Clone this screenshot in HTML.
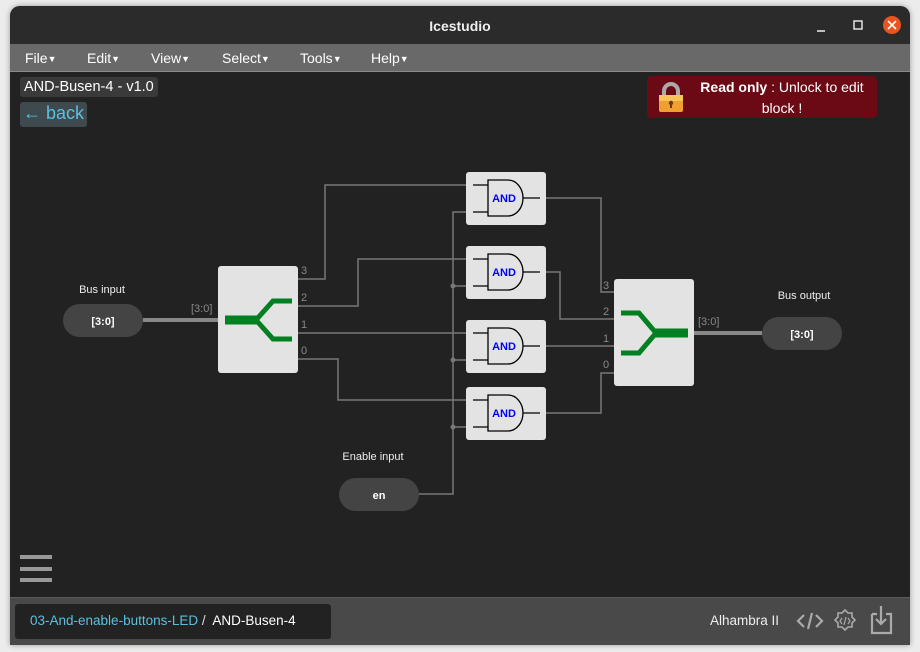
<!DOCTYPE html>
<html><head><meta charset="utf-8">
<style>
*{margin:0;padding:0;box-sizing:border-box}
body{width:920px;height:652px;background:#ececec;font-family:"Liberation Sans",sans-serif;position:relative;overflow:hidden}
.win{position:absolute;left:10px;top:6px;width:900px;height:639px;background:#222;border-radius:10px 10px 0 0;overflow:hidden;box-shadow:0 0 6px rgba(0,0,0,.35)}
.title{position:absolute;left:0;top:0;width:900px;height:38px;background:#2b2b2b;color:#eee;font-weight:bold;font-size:14px;text-align:center;line-height:40px}
.menu{position:absolute;left:0;top:38px;width:900px;height:28px;background:#696969;border-bottom:1px solid #8a8a8a;color:#fff;font-size:14px}
.menu span{position:absolute;top:6px}
.menu small{font-size:9px;vertical-align:1px}
.foot{position:absolute;left:0;top:591px;width:900px;height:48px;background:#494949;border-top:1px solid #5a5a5a}
</style></head><body>
<div class="win">
<div class="title">Icestudio</div>
<svg style="position:absolute;left:0;top:0" width="900" height="38">
<line x1="807" y1="25" x2="815" y2="25" stroke="#eee" stroke-width="1.5"/>
<rect x="844" y="15" width="8" height="8" fill="none" stroke="#eee" stroke-width="1.4"/>
<circle cx="882" cy="19" r="9" fill="#e95420"/>
<path d="M878 15 L886 23 M886 15 L878 23" stroke="#fff" stroke-width="1.6"/>
</svg>
<div class="menu">
<span style="left:15px">File<small>▼</small></span><span style="left:77px">Edit<small>▼</small></span><span style="left:141px">View<small>▼</small></span><span style="left:212px">Select<small>▼</small></span><span style="left:290px">Tools<small>▼</small></span><span style="left:361px">Help<small>▼</small></span>
</div>
<div style="position:absolute;left:10px;top:71px;background:#3a3a3a;color:#fff;font-size:14.5px;padding:1px 4px;border-radius:3px;height:20px;line-height:19px">AND-Busen-4 - v1.0</div>
<div style="position:absolute;left:10px;top:96px;background:#3f4a4f;color:#5bc0de;font-size:18px;padding:0 3px;border-radius:3px;height:25px;line-height:23px">← back</div>
<div style="position:absolute;left:637px;top:70px;width:230px;height:42px;background:#6b0a15;border-radius:4px;color:#fff;font-size:14px">
<svg style="position:absolute;left:9px;top:5px" width="30" height="32"><path d="M8 15 V10 a7 7 0 0 1 14 0 V15" fill="none" stroke="#aaa" stroke-width="4"/><rect x="3" y="14" width="24" height="17" rx="2" fill="#f0a030"/><rect x="3" y="14" width="24" height="6" fill="#f7c45a"/><circle cx="15" cy="22" r="2.2" fill="#6b3a10"/><rect x="14" y="22" width="2" height="5" fill="#6b3a10"/></svg>
<div style="position:absolute;left:42px;top:1px;width:186px;text-align:center;line-height:21px"><b>Read only</b> : Unlock to edit block !</div>
</div>
<svg style="position:absolute;left:-10px;top:-6px" width="920" height="652">
<g fill="none" stroke="#777" stroke-width="1.5">
<path d="M298 279 H325 V185 H466"/>
<path d="M298 306 H358 V259 H466"/>
<path d="M298 333 H466"/>
<path d="M298 359 H338 V400 H466"/>
<path d="M419 494 H453 V212 H466 M453 286 H466 M453 360 H466 M453 427 H466"/>
<path d="M546 198 H601 V292 H614"/>
<path d="M546 272 H560 V319 H614"/>
<path d="M546 346 H614"/>
<path d="M546 413 H601 V373 H614"/>
</g>
<g fill="#777"><circle cx="453" cy="286" r="2.5"/><circle cx="453" cy="360" r="2.5"/><circle cx="453" cy="427" r="2.5"/></g>
<line x1="143" y1="320" x2="218" y2="320" stroke="#888" stroke-width="4"/>
<line x1="694" y1="333" x2="762" y2="333" stroke="#888" stroke-width="4"/>
<g font-size="11" fill="#888" font-family="Liberation Sans,sans-serif">
<text x="191" y="312">[3:0]</text><text x="698" y="325">[3:0]</text>
<text x="301" y="274">3</text><text x="301" y="301">2</text><text x="301" y="328">1</text><text x="301" y="354">0</text>
<text x="603" y="289">3</text><text x="603" y="315">2</text><text x="603" y="342">1</text><text x="603" y="368">0</text>
</g>
<rect x="218" y="266" width="80" height="107" rx="3" fill="#e3e3e3"/>
<path d="M225 320 H258" stroke="#008020" stroke-width="9"/>
<path d="M256 320 L273 301 H292 M256 320 L273 339 H292" stroke="#008020" stroke-width="5" fill="none"/>
<rect x="614" y="279" width="80" height="107" rx="3" fill="#e3e3e3"/>
<path d="M654 333 H688" stroke="#008020" stroke-width="9"/>
<path d="M656 333 L639 313 H621 M656 333 L639 353 H621" stroke="#008020" stroke-width="5" fill="none"/>
<g id="g1">
<rect x="466" y="172" width="80" height="53" rx="3" fill="#e3e3e3"/>
<path d="M473 185 H488 M473 212 H488 M523 198 H540" stroke="#000" stroke-width="1.3"/>
<path d="M488 180 H508 A15 18 0 0 1 508 216 H488 Z" fill="none" stroke="#000" stroke-width="1.3"/>
<text x="504" y="202" text-anchor="middle" font-size="11" font-weight="bold" fill="#00f" font-family="Liberation Sans,sans-serif">AND</text>
</g>
<use href="#g1" y="74"/><use href="#g1" y="148"/><use href="#g1" y="215"/>
<g font-family="Liberation Sans,sans-serif">
<rect x="63" y="304" width="80" height="33" rx="16.5" fill="#444"/>
<text x="103" y="325" text-anchor="middle" font-size="11" font-weight="bold" fill="#fff">[3:0]</text>
<text x="102" y="293" text-anchor="middle" font-size="11" fill="#eee">Bus input</text>
<rect x="762" y="317" width="80" height="33" rx="16.5" fill="#444"/>
<text x="802" y="338" text-anchor="middle" font-size="11" font-weight="bold" fill="#fff">[3:0]</text>
<text x="804" y="299" text-anchor="middle" font-size="11" fill="#eee">Bus output</text>
<rect x="339" y="478" width="80" height="33" rx="16.5" fill="#444"/>
<text x="379" y="499" text-anchor="middle" font-size="11" font-weight="bold" fill="#fff">en</text>
<text x="373" y="460" text-anchor="middle" font-size="11" fill="#eee">Enable input</text>
</g>
<g fill="#999"><rect x="20" y="555" width="32" height="4"/><rect x="20" y="567" width="32" height="4"/><rect x="20" y="578" width="32" height="4"/></g>
</svg>
<div class="foot">
<div style="position:absolute;left:5px;top:6px;width:316px;height:35px;background:#222;border-radius:3px;font-size:13.5px;line-height:34px;color:#ddd;padding-left:15px"><span style="color:#5bc0de">03-And-enable-buttons-LED</span> /&nbsp; <span style="color:#fff">AND-Busen-4</span></div>
<div style="position:absolute;left:700px;top:15px;color:#eee;font-size:13.5px">Alhambra II</div>
<svg style="position:absolute;left:780px;top:5px" width="120" height="40">
<g fill="none" stroke="#aaa" stroke-width="2.2">
<path d="M14 12 L8 18 L14 24 M26 12 L32 18 L26 24 M22 10 L18 26"/>
<path d="M55 7 l3 3 h4 v4 l3 3 -3 3 v4 h-4 l-3 3 -3 -3 h-4 v-4 l-3 -3 3 -3 v-4 h4 z" stroke-width="1.6"/>
<path d="M52 15 l-2 3 2 3 M58 15 l2 3 -2 3 M56 14 l-2 8" stroke-width="1.2"/>
<path d="M82 11 V30 H101 V11 H96 M87 11 H82 M91 3 V21 M86 16 L91 21 L96 16"/>
</g>
</svg>
</div>
</div>
</body></html>
